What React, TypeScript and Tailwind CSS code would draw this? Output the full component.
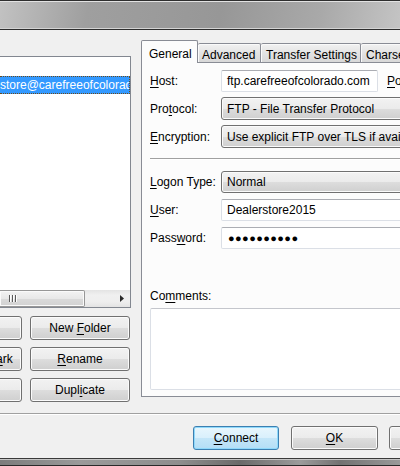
import React from 'react';

function Btn({ children, className = '' }: { children: React.ReactNode; className?: string }) {
  return (
    <div
      className={
        'h-[24px] shrink-0 rounded-[3px] border border-[#707070] bg-[linear-gradient(#f2f2f2_0%,#ebebeb_50%,#dddddd_51%,#cfcfcf_100%)] shadow-[inset_0_0_0_1px_#fbfbfb] flex items-center justify-center whitespace-nowrap ' +
        className
      }
    >
      <span>{children}</span>
    </div>
  );
}

function Input({ children, className = '' }: { children?: React.ReactNode; className?: string }) {
  return (
    <div
      className={
        'h-[22px] rounded-[2px] border border-[#dbdfe6] border-t-[#abadb3] bg-white flex items-center pl-[5px] whitespace-nowrap overflow-hidden ' +
        className
      }
    >
      {children}
    </div>
  );
}

function Select({ children }: { children: React.ReactNode }) {
  return (
    <div className="h-[23px] w-[220px] shrink-0 rounded-[3px] border border-[#707070] bg-[linear-gradient(#f2f2f2_0%,#ebebeb_50%,#dddddd_51%,#cfcfcf_100%)] shadow-[inset_0_0_0_1px_#fbfbfb] flex items-center pl-[5px] whitespace-nowrap overflow-hidden">
      {children}
    </div>
  );
}

function Row({ label, children, className = '' }: { label: React.ReactNode; children: React.ReactNode; className?: string }) {
  return (
    <div className={'flex items-center ' + className}>
      <div className="w-[71px] shrink-0 whitespace-nowrap">{label}</div>
      {children}
    </div>
  );
}

const u = (c: string) => <span className="underline underline-offset-[2px]">{c}</span>;

export default function App() {
  return (
    <div className="w-[400px] h-[466px] overflow-hidden bg-[#f0f0f0] flex flex-col font-['Liberation_Sans',Arial,sans-serif] text-[12px] text-black">
      {/* window caption strip */}
      <div className="h-[30px] shrink-0 border-y border-[#2e2e2e] bg-[linear-gradient(100deg,#c2c2c2_0%,#9f9f9f_22%,#979797_55%,#a9a9a9_80%,#c4c4c4_100%)] shadow-[inset_0_1px_0_#e2e2e2,inset_0_-1px_0_#d4d4d4]" />

      <div className="h-[383px] shrink-0 flex">
        {/* site tree + buttons */}
        <div className="w-[131px] shrink-0 pt-[26px] flex flex-col">
          <div className="h-[252px] shrink-0 border-y border-r border-[#828790] bg-white flex flex-col">
            <div className="h-[19px]" />
            <div className="h-[18px] bg-[#3399ff] text-white border-y border-r border-dotted border-[#6b4a1c] flex items-center whitespace-nowrap overflow-hidden">
              store@carefreeofcolorado.com
            </div>
            <div className="flex-1" />
            {/* horizontal scrollbar */}
            <div className="h-[17px] flex bg-[linear-gradient(#e3e3e3,#f0f0f0_30%,#eeeeee_70%,#e3e3e3)]">
              <div className="w-[85px] h-full rounded-r-[2px] border border-l-0 border-[#979797] bg-[linear-gradient(#f3f3f3_0%,#e8e8e8_50%,#dadada_51%,#d2d2d2_100%)] shadow-[inset_0_0_0_1px_#fafafa] flex items-center pl-[9px]">
                <svg width="8" height="7" viewBox="0 0 8 7">
                  <path d="M0.5 0v7M3.5 0v7M6.5 0v7" stroke="#5a5a5a" strokeWidth="1" />
                  <path d="M1.5 0v7M4.5 0v7M7.5 0v7" stroke="#ffffff" strokeWidth="1" />
                </svg>
              </div>
              <div className="flex-1" />
              <div className="w-[17px] flex items-center justify-center">
                <svg width="4" height="7" viewBox="0 0 4 7">
                  <path d="M0 0L4 3.5L0 7Z" fill="#2a2a2a" />
                </svg>
              </div>
            </div>
          </div>
          <div className="mt-[8px] flex flex-col gap-[7px]">
            <div className="flex gap-[8px]">
              <Btn className="w-[100px] ml-[-78px]">{u('N')}ew site</Btn>
              <Btn className="w-[100px]">New {u('F')}older</Btn>
            </div>
            <div className="flex gap-[8px]">
              <Btn className="w-[100px] ml-[-78px]">New Bookm{u('a')}rk</Btn>
              <Btn className="w-[100px]">{u('R')}ename</Btn>
            </div>
            <div className="flex gap-[8px]">
              <Btn className="w-[100px] ml-[-78px]">{u('D')}elete</Btn>
              <Btn className="w-[100px]">Dupl{u('i')}cate</Btn>
            </div>
          </div>
        </div>

        {/* notebook */}
        <div className="ml-[10px] w-[300px] shrink-0 pt-[10px] flex flex-col">
          <div className="h-[22px] flex items-end">
            <div className="h-[23px] w-[57px] shrink-0 -mb-px relative z-10 border-x border-t border-[#898c95] rounded-t-[2px] bg-[#fcfcfc] pl-[7px] pt-[4px]">
              General
            </div>
            <div className="h-[19px] w-[63px] shrink-0 border-t border-r border-[#898c95] rounded-t-[2px] bg-[linear-gradient(#f2f2f2,#e3e3e3_50%,#d8d8d8)] shadow-[inset_1px_1px_0_#fafafa] pl-[4px] pt-[2px]">
              Advanced
            </div>
            <div className="h-[19px] w-[100px] shrink-0 border-t border-r border-[#898c95] rounded-t-[2px] bg-[linear-gradient(#f2f2f2,#e3e3e3_50%,#d8d8d8)] shadow-[inset_1px_1px_0_#fafafa] pl-[5px] pt-[2px] whitespace-nowrap">
              Transfer Settings
            </div>
            <div className="h-[19px] w-[80px] shrink-0 border-t border-r border-[#898c95] rounded-t-[2px] bg-[linear-gradient(#f2f2f2,#e3e3e3_50%,#d8d8d8)] shadow-[inset_1px_1px_0_#fafafa] pl-[5px] pt-[2px]">
              Charset
            </div>
          </div>
          <div className="h-[335px] shrink-0 border border-[#898c95] bg-[#fcfcfc] pl-[8px] pt-[7px] flex flex-col">
            <Row label={<>{u('H')}ost:</>}>
              <Input className="w-[157px] shrink-0">ftp.carefreeofcolorado.com</Input>
              <span className="ml-[9px] whitespace-nowrap">{u('P')}ort:</span>
            </Row>
            <Row label={<>Pro{u('t')}ocol:</>} className="mt-[5px]">
              <Select>FTP - File Transfer Protocol</Select>
            </Row>
            <Row label={<>{u('E')}ncryption:</>} className="mt-[5px]">
              <Select>Use explicit FTP over TLS if available</Select>
            </Row>
            <div className="mt-[10px] h-[2px] border-t border-[#a0a0a0] border-b border-b-white" />
            <Row label={<>{u('L')}ogon Type:</>} className="mt-[11px]">
              <div className="h-[22px] w-[220px] shrink-0 rounded-[3px] border border-[#707070] bg-[linear-gradient(#f2f2f2_0%,#ebebeb_50%,#dddddd_51%,#cfcfcf_100%)] shadow-[inset_0_0_0_1px_#fbfbfb] flex items-center pl-[5px]">
                Normal
              </div>
            </Row>
            <Row label={<>{u('U')}ser:</>} className="mt-[6px]">
              <Input className="w-[220px] shrink-0">Dealerstore2015</Input>
            </Row>
            <Row label={<>Pass{u('w')}ord:</>} className="mt-[6px]">
              <Input className="w-[220px] shrink-0 pl-[6px]">
                <span className="text-[11px] tracking-[0.4px]">●●●●●●●●●●</span>
              </Input>
            </Row>
            <div className="mt-[39px] h-[15px] flex items-center">
              <span>Co{u('m')}ments:</span>
            </div>
            <div className="mt-[5px] h-[82px] w-[300px] shrink-0 rounded-[2px] border border-[#dbdfe6] border-t-[#c4c6cc] bg-white" />
          </div>
        </div>
      </div>

      <div className="h-[2px] shrink-0 border-t border-[#a0a0a0] border-b border-b-white" />

      <div className="h-[43px] shrink-0 pt-[11px] pl-[193px] flex">
        <div className="h-[24px] w-[86px] shrink-0 rounded-[3px] border border-[#3c7fb1] bg-[linear-gradient(#e8f6fd_0%,#d9f0fc_50%,#c4e6f8_51%,#b4def6_100%)] shadow-[inset_0_0_0_1px_#8fd9fb] flex items-center justify-center">
          <span>{u('C')}onnect</span>
        </div>
        <Btn className="w-[87px] ml-[12px]">{u('O')}K</Btn>
        <Btn className="w-[87px] ml-[11px]">Cancel</Btn>
      </div>

      <div className="h-[8px] shrink-0 border-t border-[#3a3a3a] bg-[linear-gradient(90deg,#7c7c7c_0%,#9a9a9a_20%,#8e8e8e_45%,#6a6a6a_60%,#9c9c9c_75%,#727272_85%,#9a9a9a_100%)] shadow-[inset_0_1px_0_#c6c6c6,inset_0_-1px_0_#2a2a2a]" />
    </div>
  );
}
